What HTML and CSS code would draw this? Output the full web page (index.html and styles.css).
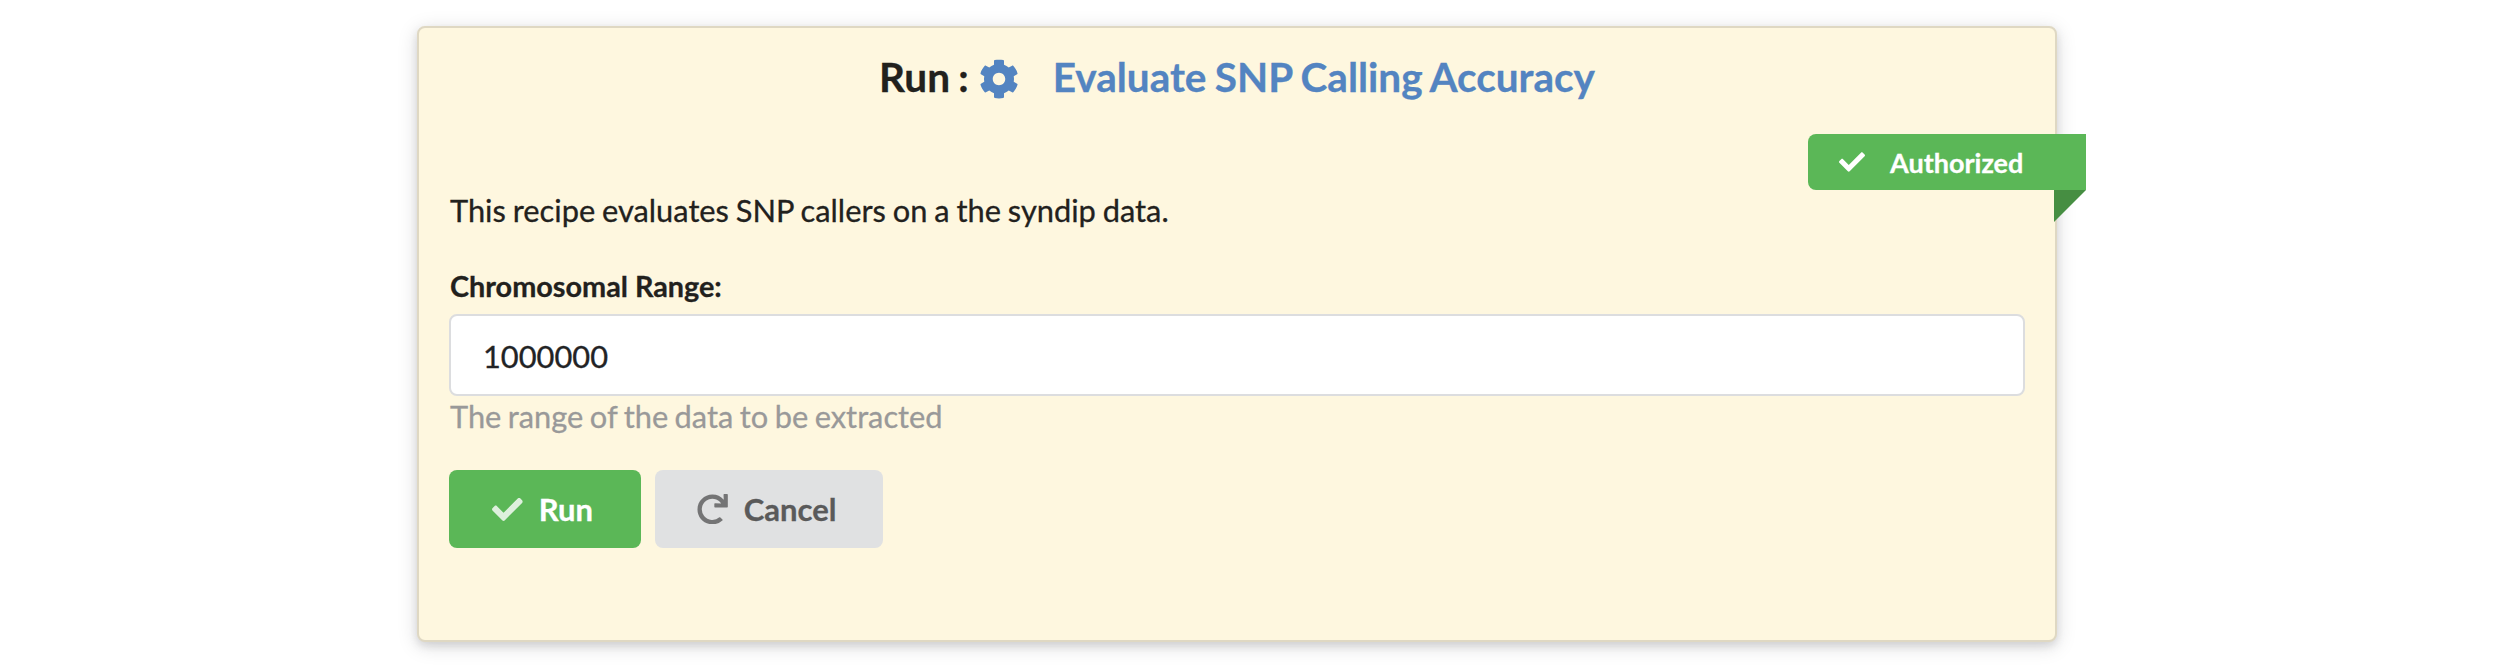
FILE: index.html
```html
<!DOCTYPE html>
<html lang="en">
<head>
<meta charset="utf-8">
<title>Run recipe</title>
<link rel="stylesheet" href="styles.css">
</head>
<body>
<svg class="defs" width="0" height="0">
<symbol id="check" viewBox="0 0 512 512"><path d="M173.898 439.404l-166.4-166.4c-9.997-9.997-9.997-26.206 0-36.204l36.203-36.204c9.997-9.998 26.207-9.998 36.204 0L192 312.69 432.095 72.596c9.997-9.997 26.207-9.997 36.204 0l36.203 36.204c9.997 9.997 9.997 26.206 0 36.204l-294.4 294.401c-9.998 9.997-26.207 9.997-36.204-.001z"/></symbol>
</svg>
<form class="card">
  <h2 class="title">
    <span>Run :</span>
    <svg class="cog" viewBox="0 0 512 512"><path d="M487.4 315.7l-42.6-24.6c4.3-23.2 4.3-47 0-70.2l42.6-24.6c4.9-2.8 7.1-8.6 5.5-14-11.1-35.6-30-67.8-54.7-94.6-3.8-4.1-10-5.1-14.8-2.3L380.8 110c-17.9-15.4-38.5-27.3-60.8-35.1V25.8c0-5.6-3.9-10.5-9.4-11.7-36.7-8.2-74.3-7.8-109.2 0-5.5 1.2-9.4 6.1-9.4 11.7V75c-22.2 7.9-42.8 19.8-60.8 35.1L88.7 85.5c-4.9-2.8-11-1.9-14.8 2.3-24.7 26.7-43.6 58.9-54.7 94.6-1.7 5.4.6 11.2 5.5 14L67.3 221c-4.3 23.2-4.3 47 0 70.2l-42.6 24.6c-4.9 2.8-7.1 8.6-5.5 14 11.1 35.6 30 67.8 54.7 94.6 3.8 4.1 10 5.1 14.8 2.3l42.6-24.6c17.9 15.4 38.5 27.3 60.8 35.1v49.2c0 5.6 3.9 10.5 9.4 11.7 36.7 8.2 74.3 7.8 109.2 0 5.5-1.2 9.4-6.1 9.4-11.7v-49.2c22.2-7.9 42.8-19.8 60.8-35.1l42.6 24.6c4.9 2.8 11 1.9 14.8-2.3 24.7-26.7 43.6-58.9 54.7-94.6 1.5-5.5-.7-11.3-5.6-14.1zM256 336c-44.1 0-80-35.9-80-80s35.9-80 80-80 80 35.9 80 80-35.9 80-80 80z"/></svg>
    <a class="recipe">Evaluate SNP Calling Accuracy</a>
  </h2>
  <div class="ribbon"><svg class="tick"><use href="#check"/></svg><span>Authorized</span></div>
  <p class="intro">This recipe evaluates SNP callers on a the syndip data.</p>
  <label class="label" for="range">Chromosomal Range:</label>
  <input class="input" id="range" type="text" value="1000000">
  <p class="help">The range of the data to be extracted</p>
  <div class="actions">
    <button class="button run" type="button"><svg class="icon"><use href="#check"/></svg><span>Run</span></button>
    <button class="button cancel" type="button"><svg class="icon" viewBox="0 0 512 512"><path d="M500.33 0h-47.41a12 12 0 0 0-12 12.57l4 82.76A247.42 247.42 0 0 0 256 8C119.34 8 7.9 119.53 8 256.19 8.1 393.07 119.1 504 256 504a247.1 247.1 0 0 0 166.18-63.91 12 12 0 0 0 .48-17.43l-34-34a12 12 0 0 0-16.38-.55A176 176 0 1 1 402.1 157.8l-101.53-4.87a12 12 0 0 0-12.57 12v47.41a12 12 0 0 0 12 12h200.33a12 12 0 0 0 12-12V12a12 12 0 0 0-12-12z"/></svg><span>Cancel</span></button>
  </div>
</form>
</body>
</html>
```
FILE: styles.css
```css
* { box-sizing: border-box; }
body { margin: 0; min-height: 666px; padding: 26px 0 0 417px; background: #fff; font-family: Lato, "Liberation Sans", sans-serif; font-size: 30.8px; color: #22211d; -webkit-text-stroke: .3px; }
svg { fill: currentColor; flex: none; }
.defs { position: absolute; }
.card {
  display: flex; flex-direction: column;
  width: 1640px; height: 616px; padding: 24px 30px 0;
  background: #fef7df; border: 2px solid #dfd8c3; border-radius: 8px;
  box-shadow: 0 4px 8px rgba(34,36,38,.12), 0 4px 20px rgba(34,36,38,.15);
}
.title { display: flex; justify-content: center; margin: 0; height: 50px; font-size: 40.5px; line-height: 50px; font-weight: 700; word-spacing: -1.5px; white-space: nowrap; }
.cog { width: 40px; height: 40px; margin: 7px 34px 0 10px; color: #5384c1; }
.recipe { color: #5384c1; }
.ribbon {
  position: relative; align-self: flex-end; display: flex; align-items: center;
  width: 278px; height: 56px; margin: 32px -61px 0 0; padding-left: 31px;
  background: #5bb757; border-radius: 8px 0 0 8px;
  color: #fff; font-size: 27px; font-weight: 700;
}
.ribbon::after { content: ""; position: absolute; right: 0; top: 100%; width: 32px; height: 32px; background: #468e42; clip-path: polygon(0 0, 100% 0, 0 100%); }
.tick { width: 26px; height: 26px; margin-right: 25px; }
.intro { margin: 0; padding-left: 1px; line-height: 42px; word-spacing: -1px; }
.label { margin-top: 36px; padding-left: 1px; font-size: 28.8px; line-height: 36px; font-weight: 700; }
.input { margin: 10px 0 0; width: 1576px; height: 82px; padding: 2px 32px 0; border: 2px solid #dcdddf; border-radius: 8px; background: #fff; color: #222325; font: inherit; outline: 0; }
.help { margin: 0; padding-left: 1px; line-height: 42px; color: #999; word-spacing: -1.4px; }
.actions { display: flex; gap: 14px; margin-top: 32px; }
.button { display: flex; align-items: center; height: 78px; padding: 0; border: 0; border-radius: 8px; font: 700 31px/30px Lato, sans-serif; }
.run { width: 192px; padding-left: 43px; background: #5bb757; color: #fff; }
.cancel { width: 228px; padding-left: 42px; background: #e0e1e2; color: #5a5a5a; }
.icon { width: 30.8px; height: 30.8px; margin-right: 16px; opacity: .8; }
```
